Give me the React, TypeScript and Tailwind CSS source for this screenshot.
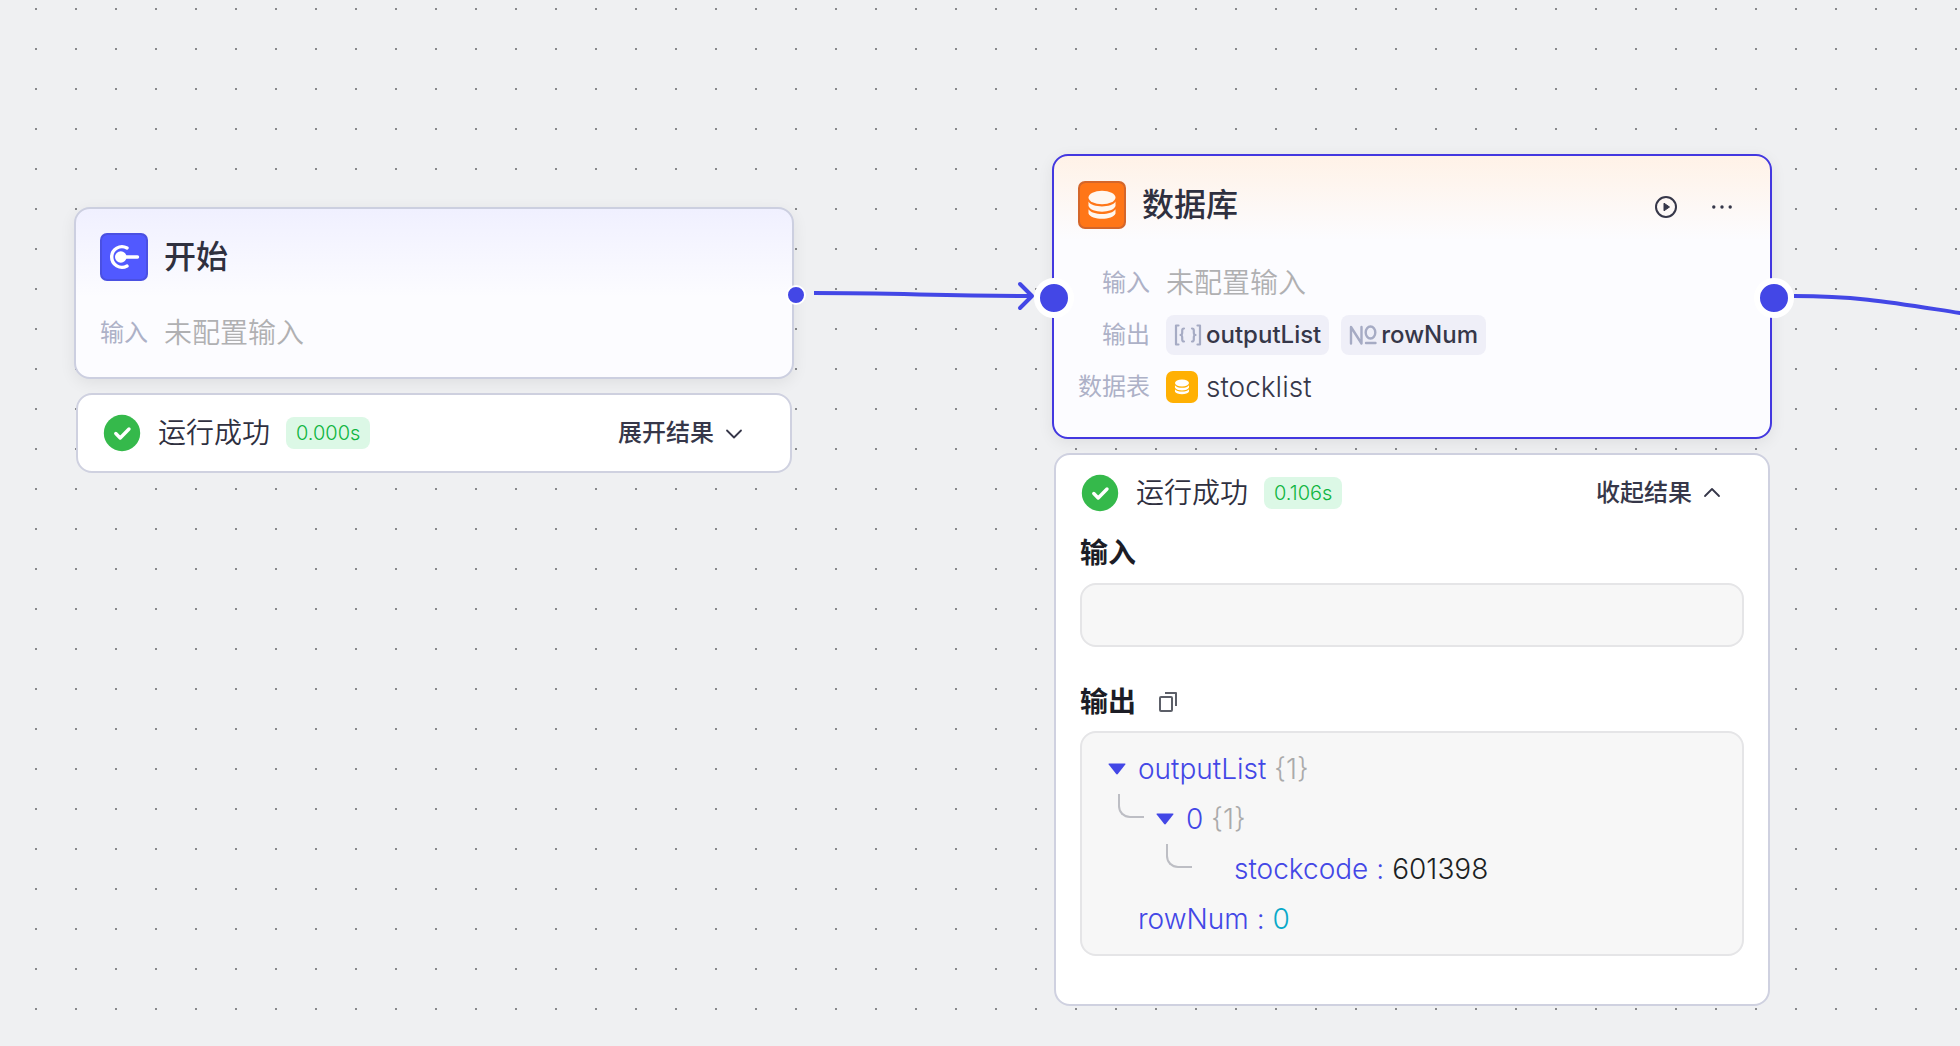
import React from "react"

const CheckIcon = () => (
  <svg viewBox="0 0 40 40" className="size-10 shrink-0" fill="none">
    <circle cx="20" cy="20" r="18.2" fill="#35b94b" />
    <path
      d="M13.8 20.5 L18.2 25 L27 16"
      stroke="#fff"
      strokeWidth="3.4"
      strokeLinecap="round"
      strokeLinejoin="round"
    />
  </svg>
)

const ChevronIcon = ({ up }: { up?: boolean }) => (
  <svg
    viewBox="0 0 24 24"
    className="size-6"
    fill="none"
    stroke="#363749"
    strokeWidth="1.8"
    strokeLinecap="round"
    strokeLinejoin="round"
  >
    <path d={up ? "M5 15 L12 8 L19 15" : "M5 9.5 L12 16.5 L19 9.5"} />
  </svg>
)

const StartIcon = () => (
  <svg viewBox="0 0 48 48" className="size-12 shrink-0" fill="none">
    <rect width="48" height="48" rx="7" fill="#4a50e2" />
    <rect x="2" y="2" width="44" height="44" rx="5.5" fill="#5159ff" />
    <path
      d="M27 15 A10.3 10.3 0 1 0 27 33"
      stroke="#fff"
      strokeWidth="3.4"
      strokeLinecap="round"
    />
    <circle cx="20.8" cy="24" r="5.8" fill="#fff" />
    <path d="M22 24 H37.5" stroke="#fff" strokeWidth="3.4" strokeLinecap="round" />
  </svg>
)

const Database = () => (
  <>
    <ellipse cx="24" cy="16.5" rx="13.5" ry="6.7" />
    <path d="M10.5 20.5 C14 27 34 27 37.5 20.5 V25 C35 32.5 13 32.5 10.5 25 Z" />
    <path d="M10.5 28.2 C14 34.5 34 34.5 37.5 28.2 V32.5 C35 39.5 13 39.5 10.5 32.5 Z" />
  </>
)

const DatabaseIcon = () => (
  <svg viewBox="0 0 48 48" className="size-12 shrink-0">
    <rect width="48" height="48" rx="7" fill="#d4662a" />
    <rect x="2" y="2" width="44" height="44" rx="5.5" fill="#ff7617" />
    <g fill="#fff7ef">
      <Database />
    </g>
  </svg>
)

const TableIcon = () => (
  <svg viewBox="0 0 32 32" className="size-8 shrink-0">
    <rect width="32" height="32" rx="7" fill="#ffb003" />
    <g fill="#fff" transform="translate(3.5 3.5) scale(0.52)">
      <Database />
    </g>
  </svg>
)

const PlayIcon = () => (
  <svg viewBox="0 0 24 24" className="size-6">
    <circle cx="12" cy="12" r="10" fill="none" stroke="#363749" strokeWidth="2" />
    <path d="M10 8.2 L15.5 12 L10 15.8 Z" fill="#363749" stroke="#363749" strokeLinejoin="round" />
  </svg>
)

const MoreIcon = () => (
  <svg viewBox="0 0 24 24" className="size-6" fill="#363749">
    <circle cx="3.8" cy="12" r="1.7" />
    <circle cx="12" cy="12" r="1.7" />
    <circle cx="20.2" cy="12" r="1.7" />
  </svg>
)

const CopyIcon = () => (
  <svg
    viewBox="0 0 24 24"
    className="size-6"
    fill="none"
    stroke="#5c5f68"
    strokeWidth="2"
    strokeLinejoin="round"
  >
    <rect x="4" y="7" width="12" height="14" rx="1" />
    <path d="M9 3 H20 V16" />
  </svg>
)

const ArrayIcon = () => (
  <svg
    viewBox="0 0 28 24"
    className="h-6 w-7"
    fill="none"
    stroke="#a6abc4"
    strokeWidth="2.2"
    strokeLinecap="round"
    strokeLinejoin="round"
  >
    <path d="M4.5 2.5 H2 V21.5 H4.5" />
    <path d="M23.5 2.5 H26 V21.5 H23.5" />
    <path d="M10 5.5 Q8.2 5.5 8.2 7.5 V9.5 Q8.2 12 6.5 12 Q8.2 12 8.2 14.5 V16.5 Q8.2 18.5 10 18.5" />
    <path d="M18 5.5 Q19.8 5.5 19.8 7.5 V9.5 Q19.8 12 21.5 12 Q19.8 12 19.8 14.5 V16.5 Q19.8 18.5 18 18.5" />
  </svg>
)

const NumberIcon = () => (
  <svg
    viewBox="0 0 28 24"
    className="h-6 w-7"
    fill="none"
    stroke="#a6abc4"
    strokeWidth="2.4"
    strokeLinecap="round"
    strokeLinejoin="round"
  >
    <path d="M2 20.5 V4 L12.5 20.5 V4" />
    <ellipse cx="21.5" cy="9.5" rx="4.8" ry="6" />
    <path d="M17 20 H26.5" />
  </svg>
)

const Caret = () => (
  <svg viewBox="0 0 18 12" className="h-3 w-[18px]" fill="#4347e6">
    <path d="M1.2 0.5 H16.8 Q18 0.5 17.3 1.6 L10 10.8 Q9 12 8 10.8 L0.7 1.6 Q0 0.5 1.2 0.5 Z" />
  </svg>
)

const Port = ({ className }: { className: string }) => (
  <span className={`absolute top-1/2 -translate-y-1/2 rounded-full bg-[#4347e6] ${className}`} />
)

const Field = ({ label, children }: { label: string; children: React.ReactNode }) => (
  <div className="contents">
    <dt className="text-right text-2xl/10 text-[#adb1c7]">{label}</dt>
    <dd className="flex h-10 items-center gap-3 text-[28px]/10 font-[350]">{children}</dd>
  </div>
)

const Chip = ({ icon, name }: { icon: React.ReactNode; name: string }) => (
  <span className="flex h-10 items-center gap-1 rounded-lg bg-[#efeff8] px-2 text-2xl/10 font-medium text-[#363749]">
    {icon}
    {name}
  </span>
)

interface ResultProps {
  time: string
  open?: boolean
  children?: React.ReactNode
}

const Result = ({ time, open, children }: ResultProps) => (
  <section className="mx-0.5 mt-3.5 rounded-2xl border-2 border-[#cfd1e0] bg-white px-6 py-[18px]">
    <div className="flex h-10 items-center text-[#2f303f]">
      <CheckIcon />
      <p className="ml-4 text-[28px]/10 font-[350]">运行成功</p>
      <span className="ml-4 rounded-lg bg-[#dcf8e6] px-2.5 text-xl/8 font-[350] text-[#0fb53f]">
        {time}
      </span>
      <button
        type="button"
        aria-expanded={!!open}
        className="mr-5 ml-auto flex items-center gap-2 text-2xl/10 font-medium text-[#363749]"
      >
        {open ? "收起结果" : "展开结果"}
        <ChevronIcon up={open} />
      </button>
    </div>
    {children}
  </section>
)

interface TreeRowProps {
  name: string
  value?: string
  count?: number
  valueClass?: string
  indent?: string
  branch?: boolean
}

const TreeRow = ({ name, value, count, valueClass, indent = "", branch }: TreeRowProps) => (
  <li className={`relative flex h-[50px] items-center ${indent}`}>
    {branch && (
      <span className="absolute top-0 -ml-[38px] h-6 w-[26px] rounded-bl-xl border-b-2 border-l-2 border-[#bdbec4]" />
    )}
    {count !== undefined ? (
      <button type="button" aria-label={name} className="mr-3">
        <Caret />
      </button>
    ) : (
      <span className="w-[30px]" />
    )}
    <span className="text-[#4347e6]">{name}</span>
    {count !== undefined && <span className="ml-2 text-[#aaaaaa]">{`{${count}}`}</span>}
    {value !== undefined && (
      <>
        <span className="mx-2 text-[#4347e6]">:</span>
        <span className={valueClass}>{value}</span>
      </>
    )}
  </li>
)

const Edges = () => (
  <svg
    className="pointer-events-none absolute inset-0 size-full"
    fill="none"
    stroke="#4347e6"
    strokeWidth="4"
    strokeLinejoin="round"
  >
    <path d="M814 293 C 900 293 940 296 1031 296" />
    <path d="M1020 284 L1032 296 L1020 308" strokeLinecap="round" />
    <path d="M1794 296 C 1860 296 1895 303 1960 313 S 2040 326 2080 328" />
  </svg>
)

const App = () => {
  return (
    <main className="relative h-screen overflow-hidden bg-[#eff0f2] bg-[radial-gradient(circle_at_1px_1px,#88898c_1px,transparent_1px)] bg-[length:40px_40px] bg-[position:35px_8px] font-['Inter','Noto_Sans_CJK_SC',sans-serif]">
      <div className="absolute top-[207px] left-[74px] w-[720px]">
        <article className="relative rounded-2xl border-2 border-[#cccfe0] bg-[#fcfcff] bg-[linear-gradient(#f0f0ff,#fcfcff_88px)] p-6 shadow-[0_4px_16px_rgba(0,0,0,0.07)]">
          <header className="mb-8 flex h-12 items-center gap-4">
            <StartIcon />
            <h2 className="text-[32px]/12 font-medium text-[#2f303f]">开始</h2>
          </header>
          <dl className="grid grid-cols-[auto_1fr] gap-x-4 gap-y-3">
            <Field label="输入">
              <span className="text-[#b0b0b2]">未配置输入</span>
            </Field>
          </dl>
          <Port className="-right-3.5 mt-0.5 size-5 border-2 border-white" />
        </article>
        <Result time="0.000s" />
      </div>

      <div className="absolute top-[154px] left-[1052px] w-[720px]">
        <article className="relative rounded-2xl border-2 border-[#4338e0] bg-[#fcfcff] bg-[linear-gradient(#fff2e7,#fcfcff_84px)] px-6 pt-6 pb-[30px] shadow-[0_4px_16px_rgba(0,0,0,0.07)]">
          <header className="mb-[33px] flex h-[50px] items-center gap-4">
            <DatabaseIcon />
            <h2 className="text-[32px]/12 font-medium text-[#2f303f]">数据库</h2>
            <div className="mr-3 ml-auto flex items-center gap-8 pt-1">
              <button type="button" aria-label="play">
                <PlayIcon />
              </button>
              <button type="button" aria-label="more">
                <MoreIcon />
              </button>
            </div>
          </header>
          <dl className="grid grid-cols-[auto_1fr] gap-x-4 gap-y-3">
            <Field label="输入">
              <span className="text-[#b0b0b2]">未配置输入</span>
            </Field>
            <Field label="输出">
              <Chip icon={<ArrayIcon />} name="outputList" />
              <Chip icon={<NumberIcon />} name="rowNum" />
            </Field>
            <Field label="数据表">
              <span className="flex items-center gap-2 text-[#363749]">
                <TableIcon />
                stocklist
              </span>
            </Field>
          </dl>
          <Port className="-left-5 mt-px size-10 border-6 border-white" />
          <Port className="-right-6 mt-px size-10 border-6 border-white" />
        </article>
        <Result time="0.106s" open>
          <h3 className="mt-5 mb-2.5 text-[28px]/10 font-semibold text-[#1c1d26]">输入</h3>
          <div className="h-16 rounded-2xl border-2 border-[#e5e5e7] bg-[#f7f7f7]" />
          <div className="mt-[35px] mb-[9px] flex items-center gap-5">
            <h3 className="text-[28px]/10 font-semibold text-[#1c1d26]">输出</h3>
            <button type="button" aria-label="copy">
              <CopyIcon />
            </button>
          </div>
          <ul className="mb-[30px] rounded-2xl border-2 border-[#e5e5e7] bg-[#f7f7f7] px-[26px] pt-[11px] pb-2.5 text-[28px]/10 font-[350]">
            <TreeRow name="outputList" count={1} />
            <TreeRow name="0" count={1} indent="pl-12" branch />
            <TreeRow
              name="stockcode"
              value="601398"
              valueClass="text-[#1c1f23]"
              indent="pl-24"
              branch
            />
            <TreeRow name="rowNum" value="0" valueClass="text-[#0aa9c9]" />
          </ul>
        </Result>
      </div>
      <Edges />
    </main>
  )
}

export default App
